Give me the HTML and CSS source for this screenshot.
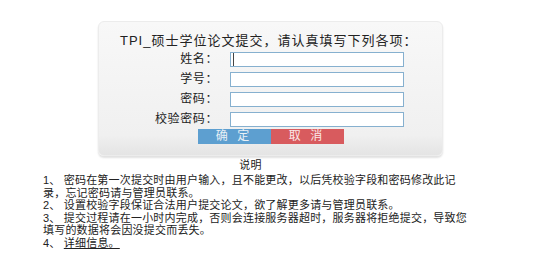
FILE: index.html
```html
<!DOCTYPE html>
<html lang="zh-CN">
<head>
  <meta charset="UTF-8" />
  <title>TPI_硕士学位论文提交</title>
  <link rel="stylesheet" href="styles.css">
</head>
<body>

  <!-- Login form -->
  <div class="panel">
    <div class="title">TPI_硕士学位论文提交，请认真填写下列各项：</div>
    <div class="rows">
      <label for="name">姓名：</label>
      <input type="text" id="name" class="focused">
      <label for="sno">学号：</label>
      <input type="text" id="sno">
      <label for="pwd">密码：</label>
      <input type="password" id="pwd">
      <label for="chk">校验密码：</label>
      <input type="password" id="chk">
    </div>
    <div class="buttons">
      <button class="ok">确 定</button>
      <button class="cancel">取 消</button>
    </div>
  </div>

  <!-- Notes -->
  <div class="notes">
    <div class="notes-title">说明</div>
    <p>1、 密码在第一次提交时由用户输入，且不能更改，以后凭校验字段和密码修改此记录，忘记密码请与管理员联系。</p>
    <p>2、 设置校验字段保证合法用户提交论文，欲了解更多请与管理员联系。</p>
    <p>3、 提交过程请在一小时内完成，否则会连接服务器超时，服务器将拒绝提交，导致您填写的数据将会因没提交而丢失。</p>
    <p>4、 <a href="#">详细信息。</a></p>
  </div>

</body>
</html>
```

FILE: styles.css
```css
body {
  margin: 0;
  padding: 21px 0 0;
  background: #fff;
  color: #222;
  font-family: "Liberation Sans", "Noto Sans CJK SC", sans-serif;
}

.panel {
  box-sizing: border-box;
  width: 345px;
  height: 135px;
  margin-left: 98px;
  padding-top: 11px;
  background: linear-gradient(#f8f8f8, #f0f0f0 85%, #e4e4e4);
  border: 1px solid #ececec;
  border-radius: 6px;
  box-shadow: 0 2px 2px rgba(0,0,0,0.12);
}

.title {
  padding-left: 21px;
  font-size: 13px;
  line-height: 16px;
  letter-spacing: 1px;
  color: #222;
  white-space: nowrap;
}

.rows {
  display: grid;
  grid-template-columns: 119px 174px;
  column-gap: 12px;
  row-gap: 5px;
  margin-top: 3px;
  align-items: center;
}

.rows label {
  text-align: right;
  font-size: 12px;
  line-height: 15px;
  letter-spacing: 0.6px;
  color: #222;
}

.rows input {
  box-sizing: border-box;
  width: 174px;
  height: 15px;
  margin: 0;
  padding: 0 3px;
  border: 1px solid #86b0cf;
  background: #fff;
  font-size: 11px;
  outline: none;
}

.rows input.focused {
  box-shadow: inset 2px 0 0 #fff, inset 3px 0 0 #444;
}

.buttons {
  display: flex;
  justify-content: center;
  margin-top: 2px;
}

.buttons button {
  width: 73px;
  height: 15px;
  margin: 0;
  padding: 0;
  border: none;
  color: #e8f0f6;
  font-family: inherit;
  font-size: 12px;
  line-height: 15px;
  letter-spacing: 3px;
  cursor: pointer;
}

.buttons .ok {
  background-color: #5d9fd0;
}

.buttons .cancel {
  background-color: #d85b5e;
  color: #fbe8e8;
}

.notes {
  width: 425px;
  margin: 3px 0 0 43px;
  font-size: 11px;
  line-height: 12.6px;
  letter-spacing: 0.2px;
  color: #222;
}

.notes-title {
  text-align: center;
  margin: 0 0 2px -10px;
  line-height: 13px;
}

.notes p {
  margin: 0;
}

.notes a {
  color: #222;
  text-decoration: underline;
}
```
